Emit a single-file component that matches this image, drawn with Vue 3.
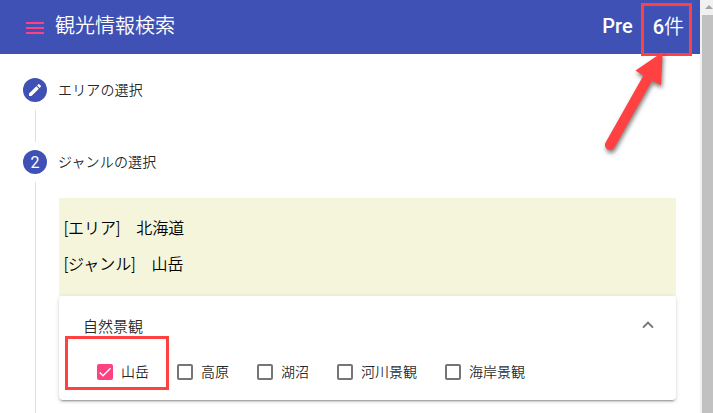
<template>
    <div class="page">
        <main class="content">
            <header class="toolbar">
                <button class="menu-btn" aria-label="menu">
                    <svg width="18" height="12" viewBox="0 0 18 12">
                        <path d="M0 0h18v2H0zM0 5h18v2H0zM0 10h18v2H0z" fill="#ff4081" />
                    </svg>
                </button>
                <h1>観光情報検索</h1>
                <span class="pre">Pre</span>
                <span class="count">{{ count }}<span class="unit">件</span></span>
            </header>

            <section class="stepper">
                <div class="step-header">
                    <span class="step-icon">
                        <svg width="16" height="16" viewBox="0 0 24 24">
                            <path d="M3 17.25V21h3.75L17.81 9.94l-3.75-3.75L3 17.25zM20.71 7.04a1 1 0 0 0 0-1.41l-2.34-2.34a1 1 0 0 0-1.41 0l-1.83 1.83 3.75 3.75 1.83-1.83z" fill="#fff" />
                        </svg>
                    </span>
                    <span class="step-label">エリアの選択</span>
                </div>
                <div class="step-line"></div>

                <div class="step-header">
                    <span class="step-icon">2</span>
                    <span class="step-label">ジャンルの選択</span>
                </div>

                <div class="step-body">
                    <div class="summary">
                        <p>[エリア]　北海道</p>
                        <p>[ジャンル]　山岳</p>
                    </div>

                    <div class="panel">
                        <div class="panel-header" @click="opened = !opened">
                            <span>自然景観</span>
                            <svg width="12" height="8" viewBox="0 0 12 8">
                                <path d="M1 6.6L6 1.6l5 5" fill="none" stroke="#757575" stroke-width="2" />
                            </svg>
                        </div>
                        <div v-if="opened" class="genres">
                            <label v-for="genre in genres" :key="genre.name" class="genre">
                                <input v-model="genre.checked" type="checkbox" />
                                <span class="box">
                                    <svg v-if="genre.checked" width="16" height="16" viewBox="0 0 24 24">
                                        <path d="M4.1 12.7L9 17.6 20.3 6.3" fill="none" stroke="#fff" stroke-width="2.1" />
                                    </svg>
                                </span>
                                <span class="genre-name">{{ genre.name }}</span>
                            </label>
                        </div>
                    </div>
                </div>
            </section>
        </main>

        <aside class="scrollbar">
            <div class="scroll-up"></div>
            <div class="scroll-thumb"></div>
        </aside>

        <!-- 注釈 -->
        <div class="mark mark-count"></div>
        <div class="mark mark-genre"></div>
        <svg class="arrow" width="90" height="120" viewBox="0 0 90 120">
            <path d="M62.7 12L61 45.3l-9-4.6-37.6 66.8a5 5 0 0 1-8.8-5l37.7-66.8-7.8-5.2z" fill="#ff4141" />
        </svg>
    </div>
</template>

<script setup>
    import { ref } from 'vue';

    const count = ref(6);
    const opened = ref(true);

    const genres = ref([
        { name: '山岳', checked: true },
        { name: '高原', checked: false },
        { name: '湖沼', checked: false },
        { name: '河川景観', checked: false },
        { name: '海岸景観', checked: false }
    ]);
</script>

<style>
    body {
        margin: 0;
        overflow: hidden;
    }
</style>

<style scoped>
    .page {
        position: relative;
        display: flex;
        height: 413px;
        overflow: hidden;
        background: #fff;
        color: #000;
        font-family: Roboto, 'Noto Sans CJK JP', sans-serif;
        font-weight: 350;
    }

    .content {
        flex: 1;
        display: flex;
        flex-direction: column;
    }

    .toolbar {
        display: flex;
        align-items: center;
        box-sizing: border-box;
        height: 54px;
        padding: 0 16px 4px 26px;
        background: #3f51b5;
        color: #fff;
        font-size: 20px;
        font-weight: 500;
    }

    .menu-btn {
        display: flex;
        margin-right: 11px;
        padding: 6px 0 0;
        border: none;
        background: none;
        cursor: pointer;
    }

    h1 {
        flex: 1;
        margin: 0;
        padding-bottom: 1px;
        font-size: 20px;
        font-weight: 350;
    }

    .pre {
        margin-right: 20px;
        padding-top: 2px;
    }

    .unit {
        font-weight: 350;
    }

    .stepper {
        flex: 1;
        display: flex;
        flex-direction: column;
        padding: 24px 24px 0 23px;
    }

    .step-header {
        display: flex;
        align-items: center;
        height: 24px;
        gap: 11px;
        font-size: 14px;
        color: rgba(0, 0, 0, 0.87);
    }

    .step-label {
        padding-bottom: 2px;
        letter-spacing: 0.15px;
    }

    .step-icon {
        display: flex;
        align-items: center;
        justify-content: center;
        width: 24px;
        height: 24px;
        border-radius: 50%;
        background: #3f51b5;
        color: #fff;
        font-size: 16px;
        font-weight: 400;
    }

    .step-line {
        width: 1px;
        height: 32px;
        margin: 8px 0 8px 12px;
        background: #e0e0e0;
    }

    .step-body {
        flex: 1;
        margin: 8px 0 0 12px;
        padding: 16px 0 0 23px;
        border-left: 1px solid #e0e0e0;
    }

    .summary {
        box-sizing: border-box;
        height: 98px;
        padding: 19px 5px 0;
        background: #f5f5dc;
        font-size: 16px;
        letter-spacing: 0.08px;
    }

        .summary p {
            margin: 0 0 12px;
            line-height: 24px;
        }

    .panel {
        box-sizing: border-box;
        position: relative;
        height: 104px;
        padding: 18px 22px 0 24px;
        border-radius: 4px;
        background: #fff;
        box-shadow: 0 3px 1px -2px rgba(0, 0, 0, 0.2), 0 2px 2px 0 rgba(0, 0, 0, 0.14), 0 1px 5px 0 rgba(0, 0, 0, 0.12);
        color: rgba(0, 0, 0, 0.87);
    }

    .panel-header {
        display: flex;
        align-items: center;
        justify-content: space-between;
        height: 22px;
        font-size: 15px;
        cursor: pointer;
    }

    .genres {
        display: flex;
        gap: 28px;
        padding: 26px 0 0 14px;
        font-size: 14px;
    }

    .genre {
        display: flex;
        align-items: center;
        gap: 8px;
        height: 20px;
        white-space: nowrap;
        cursor: pointer;
    }

        .genre input {
            display: none;
        }

    .genre-name {
        padding-bottom: 2px;
    }

    .box {
        box-sizing: border-box;
        display: flex;
        width: 16px;
        height: 16px;
        border: 2px solid #757575;
        border-radius: 2px;
    }

        .genre input:checked + .box {
            border: none;
            background: #ff4081;
        }

    .scrollbar {
        width: 13px;
        background: #f1f1f1;
    }

    .scroll-up {
        width: 0;
        margin: 5px 0 6px 5px;
        border: 4px solid transparent;
        border-top: none;
        border-bottom: 4px solid #a3a3a3;
    }

    .scroll-thumb {
        height: 398px;
        margin-left: 2px;
        background: #c1c1c1;
    }

    .mark {
        position: absolute;
        box-sizing: border-box;
        border: 3px solid #ff4141;
    }

    .mark-count {
        left: 641px;
        top: 3px;
        width: 51px;
        height: 53px;
    }

    .mark-genre {
        left: 65px;
        top: 336px;
        width: 104px;
        height: 54px;
    }

    .arrow {
        position: absolute;
        left: 600px;
        top: 40px;
        filter: drop-shadow(1px 3px 2px rgba(0, 0, 0, 0.5));
    }
</style>
